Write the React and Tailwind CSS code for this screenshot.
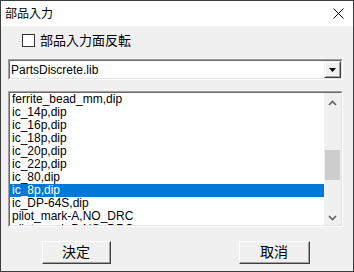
import React from "react";

const items = [
  "ferrite_bead_mm,dip",
  "ic_14p,dip",
  "ic_16p,dip",
  "ic_18p,dip",
  "ic_20p,dip",
  "ic_22p,dip",
  "ic_80,dip",
  "ic_8p,dip",
  "ic_DP-64S,dip",
  "pilot_mark-A,NO_DRC",
  "pilot_mark-B,NO_DRC",
];

const font = { fontFamily: '"Liberation Sans", "Noto Sans CJK JP", sans-serif' };

function Button({ children, className }) {
  return (
    <div className={"h-[23px] " + className}>
      <div className="h-full w-full border-t border-l border-t-white border-l-white border-b border-r border-b-[#404040] border-r-[#404040] bg-[#f0f0f0]">
        <div className="h-full w-full border-b border-r border-b-[#a0a0a0] border-r-[#a0a0a0] flex items-center justify-center text-[14px] text-black leading-none">
          {children}
        </div>
      </div>
    </div>
  );
}

function Sunken({ children, className }) {
  return (
    <div className={"border-t border-l border-t-[#a0a0a0] border-l-[#a0a0a0] border-b border-r border-b-white border-r-white " + className}>
      <div className="h-full w-full border-t border-l border-t-[#696969] border-l-[#696969] border-b border-r border-b-[#e3e3e3] border-r-[#e3e3e3] bg-white">
        {children}
      </div>
    </div>
  );
}

export default function App() {
  return (
    <div className="w-[354px] h-[272px] border border-[#3c3c3c] bg-[#f0f0f0] flex flex-col overflow-hidden" style={font}>
      <div className="h-[25px] bg-white flex items-center justify-between pl-[4px] pr-[9px] shrink-0">
        <span className="text-[12px] leading-none text-black">部品入力</span>
        <svg width="11" height="11" viewBox="0 0 11 11" className="block">
          <path d="M0.5 0.5 L10.5 10.5 M10.5 0.5 L0.5 10.5" stroke="#000" strokeWidth="1" />
        </svg>
      </div>

      <div className="flex items-center h-[13px] mt-[8px] ml-[21px]">
        <div className="w-[13px] h-[13px] border border-[#333] bg-white shrink-0" />
        <span className="ml-[5px] text-[13px] leading-none text-black">部品入力面反転</span>
      </div>

      <Sunken className="h-[21px] ml-[7px] mr-[10px] mt-[12px]">
        <div className="flex h-full items-stretch">
          <div className="flex-1 flex items-center pl-[1px] text-[12px] leading-none text-black">PartsDiscrete.lib</div>
          <div className="w-[17px] border-t border-l border-t-[#f0f0f0] border-l-[#f0f0f0] border-b border-r border-b-[#404040] border-r-[#404040] bg-[#f0f0f0]">
            <div className="h-full w-full border-t border-l border-t-white border-l-white border-b border-r border-b-[#a0a0a0] border-r-[#a0a0a0] flex items-center justify-center">
              <svg width="7" height="4" viewBox="0 0 7 4" className="block">
                <path d="M0 0 H7 L3.5 4 Z" fill="#000" />
              </svg>
            </div>
          </div>
        </div>
      </Sunken>

      <Sunken className="h-[136px] ml-[7px] mr-[10px] mt-[11px]">
        <div className="flex h-full">
          <div className="flex-1 overflow-hidden">
            {items.map((t, i) => (
              <div
                key={t}
                className={
                  "h-[13px] pl-[2px] text-[12px] leading-[13px] whitespace-nowrap " +
                  (i === 7 ? "bg-[#0078d7] text-white" : "text-black")
                }
              >
                {t}
              </div>
            ))}
          </div>
          <div className="w-[17px] bg-[#f0f0f0] flex flex-col items-center">
            <svg width="9" height="6" viewBox="0 0 9 6" className="block mt-[7px]">
              <path d="M1 5 L4.5 1.5 L8 5" stroke="#606060" strokeWidth="1.6" fill="none" />
            </svg>
            <div className="w-[15px] h-[30px] bg-[#cdcdcd] mt-[44px]" />
            <div className="flex-1" />
            <svg width="9" height="6" viewBox="0 0 9 6" className="block mb-[4px]">
              <path d="M1 1 L4.5 4.5 L8 1" stroke="#606060" strokeWidth="1.6" fill="none" />
            </svg>
          </div>
        </div>
      </Sunken>

      <div className="flex mt-[14px]">
        <Button className="ml-[41px] w-[69px]">決定</Button>
        <Button className="ml-auto mr-[43px] w-[71px]">取消</Button>
      </div>
    </div>
  );
}
